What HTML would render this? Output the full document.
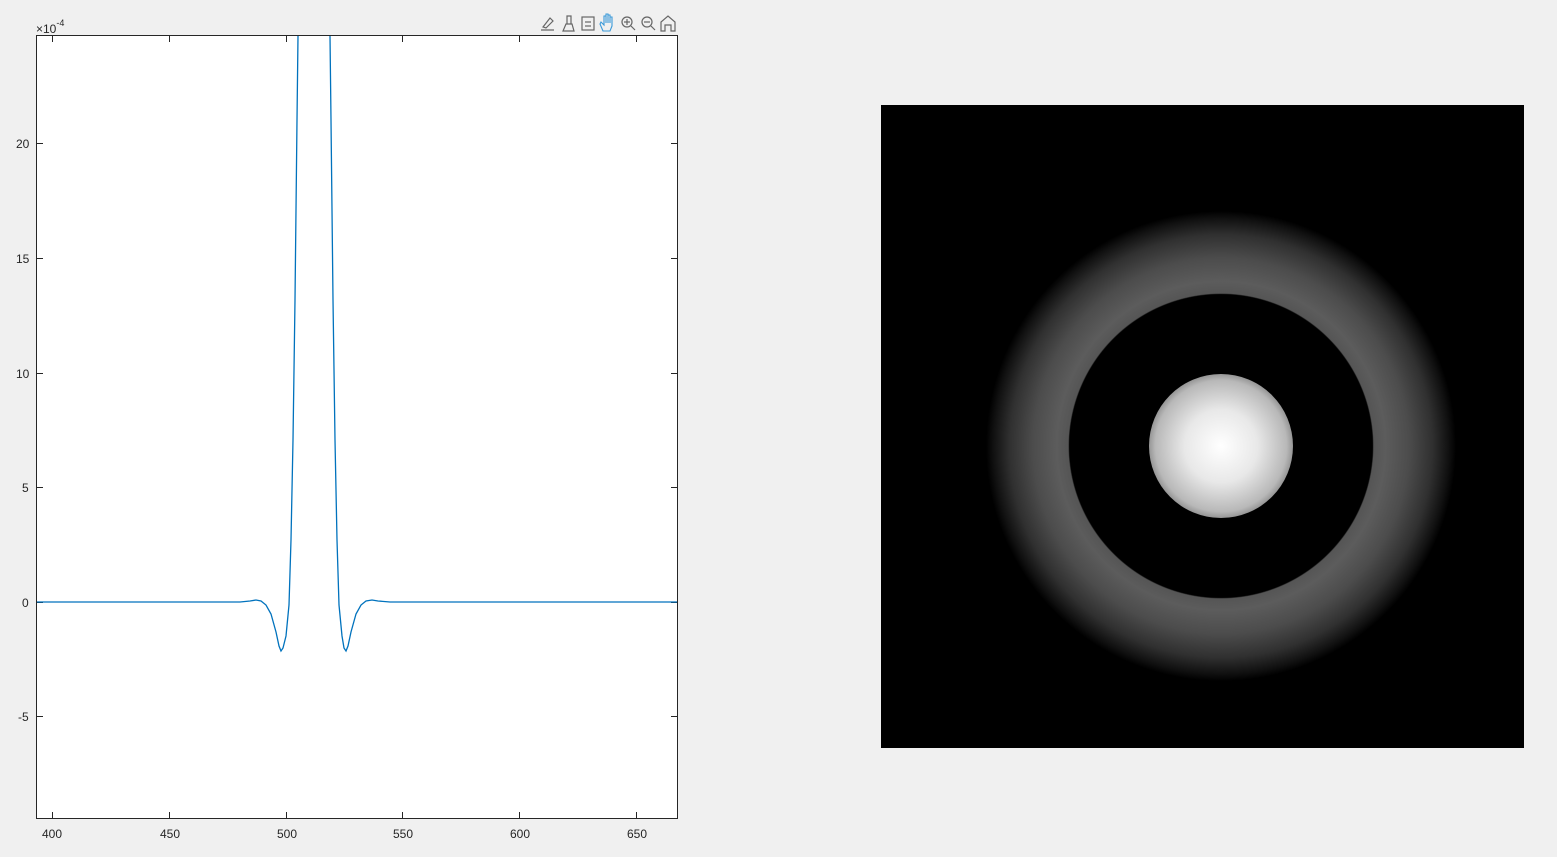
<!DOCTYPE html>
<html><head><style>
body{margin:0;width:1557px;height:857px;background:#f0f0f0;position:relative;overflow:hidden;font-family:"Liberation Sans",sans-serif;}
.t{position:absolute;font-size:12px;color:#262626;}
</style></head><body>
<svg width="1557" height="857" style="position:absolute;left:0;top:0">
<rect x="36.5" y="35.5" width="641" height="783" fill="#fff" stroke="#262626" stroke-width="1"/>
<g stroke="#262626" stroke-width="1">
<line x1="52.5" y1="36" x2="52.5" y2="42"/><line x1="52.5" y1="818" x2="52.5" y2="812"/>
<line x1="169.5" y1="36" x2="169.5" y2="42"/><line x1="169.5" y1="818" x2="169.5" y2="812"/>
<line x1="286.5" y1="36" x2="286.5" y2="42"/><line x1="286.5" y1="818" x2="286.5" y2="812"/>
<line x1="402.5" y1="36" x2="402.5" y2="42"/><line x1="402.5" y1="818" x2="402.5" y2="812"/>
<line x1="519.5" y1="36" x2="519.5" y2="42"/><line x1="519.5" y1="818" x2="519.5" y2="812"/>
<line x1="636.5" y1="36" x2="636.5" y2="42"/><line x1="636.5" y1="818" x2="636.5" y2="812"/>
<line x1="37" y1="143.5" x2="43" y2="143.5"/><line x1="677" y1="143.5" x2="671" y2="143.5"/>
<line x1="37" y1="258.5" x2="43" y2="258.5"/><line x1="677" y1="258.5" x2="671" y2="258.5"/>
<line x1="37" y1="373.5" x2="43" y2="373.5"/><line x1="677" y1="373.5" x2="671" y2="373.5"/>
<line x1="37" y1="487.5" x2="43" y2="487.5"/><line x1="677" y1="487.5" x2="671" y2="487.5"/>
<line x1="37" y1="602.5" x2="43" y2="602.5"/><line x1="677" y1="602.5" x2="671" y2="602.5"/>
<line x1="37" y1="716.5" x2="43" y2="716.5"/><line x1="677" y1="716.5" x2="671" y2="716.5"/>
</g>
<path d="M37,602 L240,602 L250,601 L256,600 L261,601 L266,605 L271,614 L276,632 L279,646 L281,651 L283,648 L286,636 L289,605 L291,540 L293,440 L295,300 L297,120 L298,36 M330,36 L331,120 L333,300 L335,440 L337,540 L339,605 L342,636 L344,648 L346,651 L348,646 L351,632 L356,614 L361,605 L366,601 L372,600 L378,601 L390,602 L677,602" fill="none" stroke="#0072bd" stroke-width="1.3"/>
<defs>
<radialGradient id="ring" gradientUnits="userSpaceOnUse" cx="1221" cy="446" r="235">
<stop offset="0" stop-color="#000"/>
<stop offset="0.645" stop-color="#000"/>
<stop offset="0.65" stop-color="#555"/>
<stop offset="0.70" stop-color="#5c5c5c"/>
<stop offset="0.80" stop-color="#4c4c4c"/>
<stop offset="0.90" stop-color="#303030"/>
<stop offset="0.97" stop-color="#101010"/>
<stop offset="1" stop-color="#000"/>
</radialGradient>
<radialGradient id="disk" gradientUnits="userSpaceOnUse" cx="1221" cy="446" r="73">
<stop offset="0" stop-color="#fff"/>
<stop offset="0.5" stop-color="#e8e8e8"/>
<stop offset="0.9" stop-color="#b8b8b8"/>
<stop offset="1" stop-color="#909090"/>
</radialGradient>
</defs>
<rect x="881" y="105" width="643" height="643" fill="#000"/>
<circle cx="1221" cy="446" r="235" fill="url(#ring)"/>
<circle cx="1221" cy="446" r="72" fill="url(#disk)"/>
<g fill="none" stroke="#666" stroke-width="1.2">
<circle cx="627" cy="22" r="5"/><line x1="631" y1="26" x2="635" y2="30"/><line x1="624" y1="22" x2="630" y2="22"/><line x1="627" y1="19" x2="627" y2="25"/>
<circle cx="647" cy="22" r="5"/><line x1="651" y1="26" x2="655" y2="30"/><line x1="644" y1="22" x2="650" y2="22"/>
<path d="M661,31 V22 L668,16 L675,22 V31 H671 V25 H665 V31 Z"/>
<rect x="582" y="17" width="12" height="13"/><line x1="585" y1="22" x2="591" y2="22"/><line x1="585" y1="26" x2="591" y2="26"/>
<path d="M563,31 H574 L572,24 H566 Z M567,24 V16 H571 V24"/>
<path d="M541,30 H554 M543,27 L550,18 L553,21 L546,28 Z"/>
</g>
<path d="M603,31 L600,24 L601,22 L604,25 V16 H606 V23 V14 H608 V23 V15 H610 V23 V17 H612 V26 L610,31 Z" fill="none" stroke="#3a9ad9" stroke-width="1.1"/>
</svg>
<div class="t" style="left:36px;top:20px;font-size:12px">×10<sup style="font-size:9px;position:relative;top:-2px">-4</sup></div>
<div class="t" style="left:42px;top:827px">400</div>
<div class="t" style="left:160px;top:827px">450</div>
<div class="t" style="left:277px;top:827px">500</div>
<div class="t" style="left:393px;top:827px">550</div>
<div class="t" style="left:510px;top:827px">600</div>
<div class="t" style="left:627px;top:827px">650</div>
<div class="t" style="left:16px;top:137px">20</div>
<div class="t" style="left:16px;top:252px">15</div>
<div class="t" style="left:16px;top:367px">10</div>
<div class="t" style="left:22px;top:481px">5</div>
<div class="t" style="left:22px;top:596px">0</div>
<div class="t" style="left:18px;top:710px">-5</div>
</body></html>
